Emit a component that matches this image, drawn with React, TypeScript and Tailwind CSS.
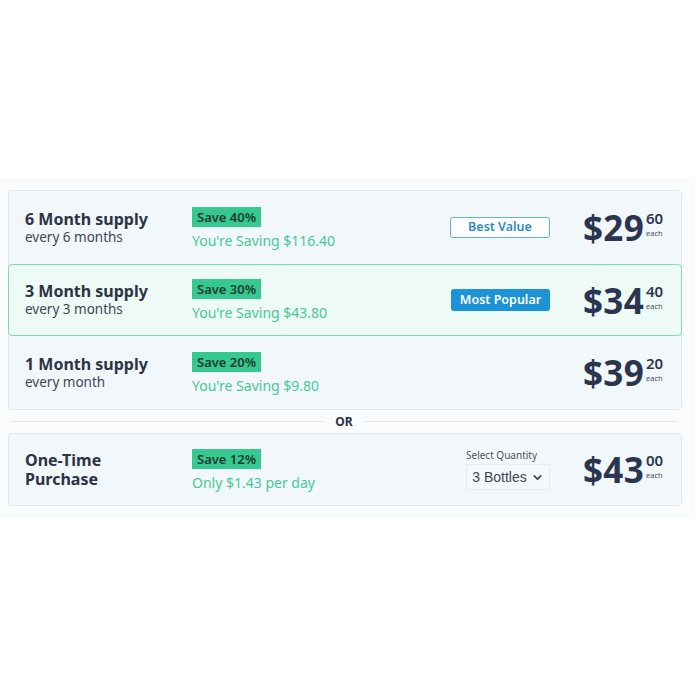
import React from 'react';
import { ChevronDown } from 'lucide-react';

const font = { fontFamily: '"Noto Sans", Inter, sans-serif' };

interface Plan {
  title: string;
  sub: string;
  save: string;
  note: string;
  badge?: 'best' | 'popular';
  dollars: string;
  cents: string;
  active?: boolean;
}

const plans: Plan[] = [
  { title: '6 Month supply', sub: 'every 6 months', save: 'Save 40%', note: "You're Saving $116.40", badge: 'best', dollars: '$29', cents: '60' },
  { title: '3 Month supply', sub: 'every 3 months', save: 'Save 30%', note: "You're Saving $43.80", badge: 'popular', dollars: '$34', cents: '40', active: true },
  { title: '1 Month supply', sub: 'every month', save: 'Save 20%', note: "You're Saving $9.80", dollars: '$39', cents: '20' },
];

function Price({ dollars, cents }: { dollars: string; cents: string }) {
  return (
    <div className="flex items-start w-[82px]">
      <span className="text-[35px] leading-none font-bold text-[#2b3550] tracking-[0.3px]">{dollars}</span>
      <div className="flex flex-col items-start ml-[2px] mt-[1px]">
        <span className="text-[15px] leading-[15px] font-semibold text-[#2b3550]">{cents}</span>
        <span className="text-[7.5px] leading-[8px] mt-[3px] text-[#4a5366]">each</span>
      </div>
    </div>
  );
}

function SaveCol({ save, note }: { save: string; note: string }) {
  return (
    <div className="flex flex-col items-start w-[180px] pt-[2px]">
      <span className="bg-[#35c98f] text-[#1f3b35] text-[13px] leading-[20px] font-semibold px-[5px]">{save}</span>
      <span className="mt-[4px] text-[14px] text-[#48c993] leading-[20px]">{note}</span>
    </div>
  );
}

function Row({ p }: { p: Plan }) {
  return (
    <div
      className={
        p.active
          ? 'flex items-center h-[72px] pl-[16px] pr-[16px] bg-[#edfaf5] border border-[#7fdcb7] rounded-[4px] -mx-px'
          : 'flex items-center h-[73px] pl-[16px] pr-[16px]'
      }
    >
      <div className="w-[167px] flex flex-col">
        <span className="text-[16px] leading-[19px] font-bold text-[#2c3346]">{p.title}</span>
        <span className="text-[13.5px] leading-[17px] text-[#3f4658]">{p.sub}</span>
      </div>
      <SaveCol save={p.save} note={p.note} />
      <div className="flex-1 flex justify-end pr-[33px]">
        {p.badge === 'best' && (
          <span className="w-[100px] h-[21px] flex items-center justify-center border border-[#5fb5d6] rounded-[3px] bg-white text-[#2f8cc4] text-[12.5px] font-semibold">
            Best Value
          </span>
        )}
        {p.badge === 'popular' && (
          <span className="w-[99px] h-[22px] flex items-center justify-center rounded-[3px] bg-[#1b93d4] text-white text-[12.5px] font-semibold">
            Most Popular
          </span>
        )}
      </div>
      <Price dollars={p.dollars} cents={p.cents} />
    </div>
  );
}

export default function App() {
  return (
    <div className="w-[700px] h-[700px] bg-white" style={font}>
      <div className="h-[178px]" />
      <div className="w-[695px] h-[340px] bg-[#f9fbfc] pt-[12px] pl-[8px] pr-[13px]">
        <div className="border border-[#e1e8ec] rounded-[4px] bg-[#f1f7fa]">
          {plans.map((p) => (
            <Row key={p.title} p={p} />
          ))}
        </div>
        <div className="flex items-center h-[23px]">
          <div className="flex-1 h-px bg-[#e4e9ec] ml-[2px]" />
          <span className="px-[11px] text-[12px] font-bold text-[#2c3346]">OR</span>
          <div className="flex-1 h-px bg-[#e4e9ec] mr-[4px]" />
        </div>
        <div className="flex items-center h-[73px] pl-[16px] pr-[16px] border border-[#e1e8ec] rounded-[4px] bg-[#f1f7fa]">
          <div className="w-[167px] flex flex-col">
            <span className="text-[16px] leading-[19px] font-bold text-[#2c3346]">One-Time</span>
            <span className="text-[16px] leading-[19px] font-bold text-[#2c3346]">Purchase</span>
          </div>
          <div className="flex flex-col items-start w-[180px] pt-[2px]">
            <span className="bg-[#35c98f] text-[#1f3b35] text-[13px] leading-[20px] font-semibold px-[5px]">Save 12%</span>
            <span className="mt-[4px] text-[14px] text-[#48c993] leading-[20px]">Only $1.43 per day</span>
          </div>
          <div className="flex-1 flex justify-end pr-[33px]">
            <div className="flex flex-col items-start">
              <span className="text-[10px] leading-[12px] text-[#4a5366] mb-[3px]">Select Quantity</span>
              <div
                className="w-[84px] h-[26px] flex items-center justify-center gap-[4px] border border-[#e6ecef] bg-[#f4f8fa] text-[14px] text-[#3d4557]"
                style={{ fontFamily: '"Liberation Sans", Arial, sans-serif' }}
              >
                3 Bottles
                <ChevronDown size={13} strokeWidth={3} />
              </div>
            </div>
          </div>
          <Price dollars="$43" cents="00" />
        </div>
      </div>
    </div>
  );
}
